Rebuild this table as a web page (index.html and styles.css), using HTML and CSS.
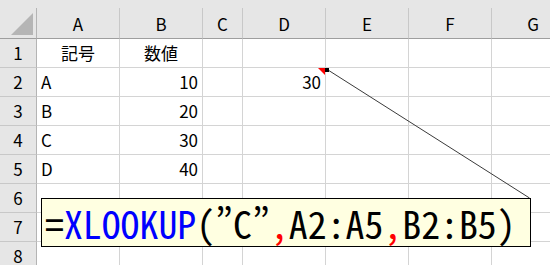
FILE: index.html
```html
<!DOCTYPE html>
<html lang="ja">
<head>
<meta charset="utf-8">
<link rel="stylesheet" href="styles.css">
</head>
<body>
<div class="page">
  <div class="sheet">
    <div class="strip"></div>
    <div class="hd corner"><span class="tri"></span></div>
    <div class="hd">A</div>
    <div class="hd">B</div>
    <div class="hd">C</div>
    <div class="hd">D</div>
    <div class="hd">E</div>
    <div class="hd">F</div>
    <div class="hd">G</div>

    <div class="rn">1</div>
    <div class="c ctr">記号</div><div class="c ctr">数値</div><div class="c"></div><div class="c"></div><div class="c"></div><div class="c"></div><div class="c"></div>

    <div class="rn">2</div>
    <div class="c">A</div><div class="c num">10</div><div class="c"></div><div class="c num">30</div><div class="c"></div><div class="c"></div><div class="c"></div>

    <div class="rn">3</div>
    <div class="c">B</div><div class="c num">20</div><div class="c"></div><div class="c"></div><div class="c"></div><div class="c"></div><div class="c"></div>

    <div class="rn">4</div>
    <div class="c">C</div><div class="c num">30</div><div class="c"></div><div class="c"></div><div class="c"></div><div class="c"></div><div class="c"></div>

    <div class="rn">5</div>
    <div class="c">D</div><div class="c num">40</div><div class="c"></div><div class="c"></div><div class="c"></div><div class="c"></div><div class="c"></div>

    <div class="rn">6</div>
    <div class="c"></div><div class="c"></div><div class="c"></div><div class="c"></div><div class="c"></div><div class="c"></div><div class="c"></div>

    <div class="rn">7</div>
    <div class="c"></div><div class="c"></div><div class="c"></div><div class="c"></div><div class="c"></div><div class="c"></div><div class="c"></div>

    <div class="rn">8</div>
    <div class="c"></div><div class="c"></div><div class="c"></div><div class="c"></div><div class="c"></div><div class="c"></div><div class="c"></div>
  </div>

  <svg class="callout-line" width="550" height="265" viewBox="0 0 550 265">
    <polygon points="318,68 325,68 325,75" fill="#ff0000"/>
    <line x1="328" y1="70" x2="529.5" y2="198" stroke="#3a3a3a" stroke-width="1"/>
    <rect x="325" y="68" width="4" height="4" fill="#000"/>
  </svg>

  <div class="formula"><span class="k">=</span><span class="fn">XLOOKUP</span><span class="k">(<span class="q">”</span>C<span class="q">”</span></span><span class="sep">,</span><span class="k">A2:A5</span><span class="sep">,</span><span class="k">B2:B5)</span></div>
</div>
</body>
</html>
```

FILE: styles.css
```css
html, body {
  margin: 0;
  padding: 0;
  background: #ffffff;
}

.page {
  position: relative;
  width: 550px;
  height: 265px;
  overflow: hidden;
  font-family: "Noto Sans CJK JP", "Noto Sans", sans-serif;
  font-size: 17px;
  color: #000;
}

.sheet {
  display: grid;
  grid-template-columns: 37px 83px 83px 40px 83px 83px 83px 83px;
  grid-template-rows: 8px 31px repeat(8, 29px);
  width: 575px;
}

.strip {
  grid-column: 1 / -1;
  background: #e6e6e6;
}

.hd {
  background: #e6e6e6;
  border-right: 1px solid #c8c8c8;
  border-bottom: 1px solid #9e9e9e;
  display: flex;
  align-items: center;
  justify-content: center;
  box-sizing: border-box;
}

.corner {
  border-right-color: #b4b4b4;
  justify-content: flex-end;
  align-items: flex-end;
  padding: 0 3px 3px 0;
}

.tri {
  width: 22px;
  height: 22px;
  background: #b5b5b5;
  clip-path: polygon(100% 0, 100% 100%, 0 100%);
}

.rn {
  background: #e6e6e6;
  border-right: 1px solid #b4b4b4;
  border-bottom: 1px solid #c8c8c8;
  display: flex;
  align-items: center;
  justify-content: center;
  box-sizing: border-box;
  padding-bottom: 2px;
}

.c {
  border-right: 1px solid #d4d4d4;
  border-bottom: 1px solid #d4d4d4;
  display: flex;
  align-items: center;
  padding: 0 4px 1px;
  box-sizing: border-box;
  white-space: nowrap;
}

.c.ctr {
  justify-content: center;
}

.c.num {
  justify-content: flex-end;
}

.callout-line {
  position: absolute;
  left: 0;
  top: 0;
}

.formula {
  position: absolute;
  left: 41px;
  top: 198px;
  width: 490px;
  height: 49px;
  box-sizing: border-box;
  border: 1px solid #000;
  background: #ffffe1;
  padding-left: 3px;
  font-family: "Noto Sans Mono CJK JP", "Noto Sans CJK JP", monospace;
  font-size: 37.8px;
  font-weight: 300;
  line-height: 47px;
  white-space: nowrap;
}

.formula .k {
  color: #000;
}

.formula .fn {
  color: #0000ff;
}

.formula .sep {
  color: #ff0000;
}
```
